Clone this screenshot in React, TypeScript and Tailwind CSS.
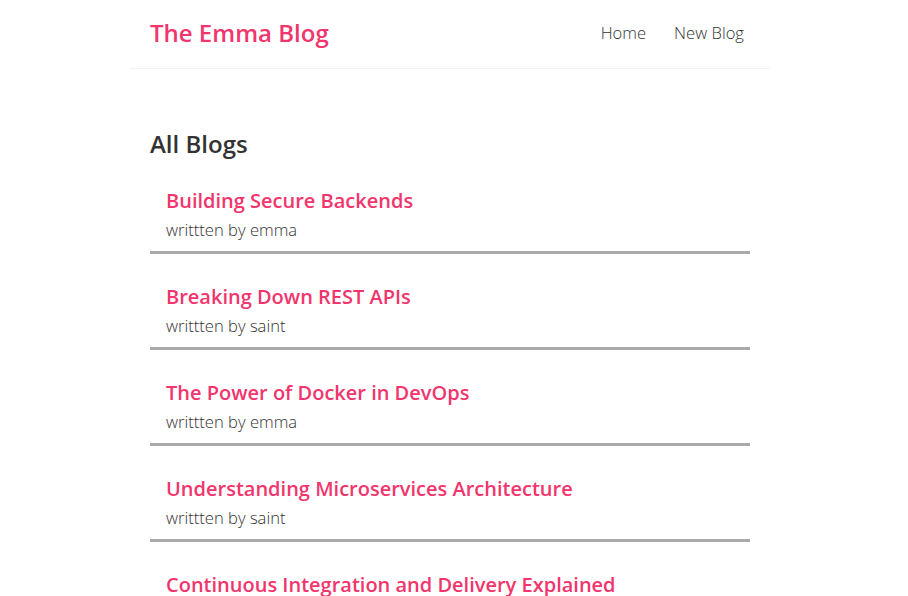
const blogs = [
  { id: 1, title: "Building Secure Backends", author: "emma" },
  { id: 2, title: "Breaking Down REST APIs", author: "saint" },
  { id: 3, title: "The Power of Docker in DevOps", author: "emma" },
  { id: 4, title: "Understanding Microservices Architecture", author: "saint" },
  { id: 5, title: "Continuous Integration and Delivery Explained", author: "emma" },
]

function Navbar() {
  return (
    <nav className="max-w-[640px] mx-auto px-5 pt-[19px] pb-[21px] flex items-center border-b border-[#f2f2f2]">
      <h1 className="text-[24px] leading-[28px] font-semibold text-[#f1356d]">The Emma Blog</h1>
      <div className="ml-auto flex">
        <a href="/" className="ml-4 p-1.5 text-[16.6px] leading-4 font-light text-[#333]">
          Home
        </a>
        <a href="/create" className="ml-4 p-1.5 text-[16.6px] leading-4 font-light text-[#333]">
          New Blog
        </a>
      </div>
    </nav>
  )
}

export default function App() {
  return (
    <div className="min-h-screen bg-white text-[#333] font-['Open_Sans',sans-serif] pr-2 overflow-hidden">
      <Navbar />
      <div className="max-w-[640px] mx-auto my-10 p-5">
        <h2 className="text-[24px] leading-[30px] font-semibold">All Blogs</h2>
        <div className="flex flex-col gap-[21px] mt-5">
          {blogs.map((blog) => (
            <div key={blog.id} className="px-4 py-2.5 border-b-[3px] border-[#aaaaaa]">
              <h2 className="text-[20px] leading-[23px] font-semibold text-[#f1356d] mb-[7px]">{blog.title}</h2>
              <p className="text-[16.6px] leading-[22px] font-light">writtten by {blog.author}</p>
            </div>
          ))}
        </div>
      </div>
    </div>
  )
}
